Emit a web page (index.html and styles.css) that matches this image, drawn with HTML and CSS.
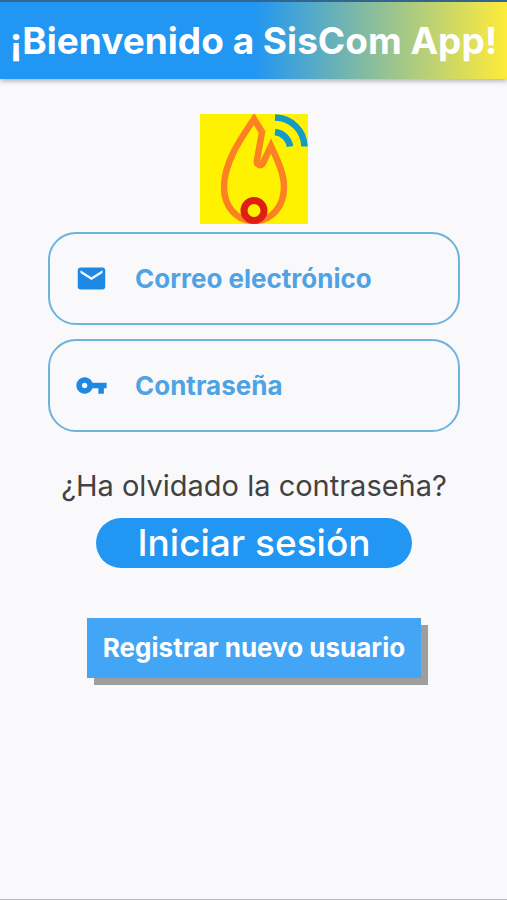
FILE: index.html
```html
<!DOCTYPE html>
<html lang="es">
<head>
<meta charset="utf-8">
<meta name="viewport" content="width=device-width, initial-scale=1">
<title>SisCom App</title>
<link rel="stylesheet" href="styles.css">
</head>
<body>
<header class="app-bar"><h1>¡Bienvenido a SisCom App!</h1></header>
<main class="login">
  <svg class="logo" viewBox="0 0 108 110" role="img" aria-label="SisCom">
    <rect width="108" height="110" fill="#fff200"/>
    <path d="M54 5C45 19 24 46 24 73C24 92 36 107 54 107C72 107 84 92 84 73C84 59 77 45 71 32L63 49C61 53 56 51 57 46L62 18Z" fill="none" stroke="#fb8122" stroke-width="6.500"/>
    <circle cx="54" cy="96.500" r="10" fill="#fff200" stroke="#df1f14" stroke-width="7"/>
    <path d="M75 3.500C91 4 104 16 104.500 32.500M75 18C83 19 89 25 90 32.500" fill="none" stroke="#129bc5" stroke-width="6.500"/>
  </svg>
  <form class="form">
    <label class="field">
      <svg class="icon" viewBox="0 0 24 24" aria-hidden="true"><path d="M20 4H4c-1.100 0-2 .9-2 2v12c0 1.100.9 2 2 2h16c1.100 0 2-.9 2-2V6c0-1.100-.9-2-2-2zm0 4l-8 5-8-5V6l8 5 8-5v2z"/></svg>
      <input type="email" placeholder="Correo electrónico" aria-label="Correo electrónico">
    </label>
    <label class="field">
      <svg class="icon" viewBox="0 0 24 24" aria-hidden="true"><path d="M12.650 10C11.830 7.670 9.610 6 7 6c-3.310 0-6 2.690-6 6s2.690 6 6 6c2.610 0 4.830-1.670 5.650-4H17v4h4v-4h2v-4H12.650zM7 14c-1.100 0-2-.9-2-2s.9-2 2-2 2 .9 2 2-.9 2-2 2z"/></svg>
      <input type="password" placeholder="Contraseña" aria-label="Contraseña">
    </label>
    <a class="forgot" href="#">¿Ha olvidado la contraseña?</a>
    <button class="sign-in" type="submit">Iniciar sesión</button>
    <button class="register" type="button">Registrar nuevo usuario</button>
  </form>
</main>
</body>
</html>
```
FILE: styles.css
```css
* {
  box-sizing: border-box;
}

body {
  margin: 0;
  min-height: 100vh;
  background: #f9f9fc;
  border-bottom: 1px solid #b8b8ba;
  font-family: Inter, "Liberation Sans", sans-serif;
}

.app-bar {
  padding: 16px 0 15px;
  border-top: 2px solid #33658f;
  background: linear-gradient(90deg, #2196f3 50%, #ffeb3b 100%);
  box-shadow: 0 2px 5px rgba(0, 0, 0, 0.3);
}

.app-bar h1 {
  margin: 0;
  color: #fff;
  font-size: 37px;
  font-weight: 700;
  line-height: 46px;
  text-align: center;
  white-space: nowrap;
}

.login {
  display: flex;
  flex-direction: column;
  align-items: center;
  padding: 35px 47px 0 48px;
}

.logo {
  display: block;
  width: 108px;
  height: 110px;
}

.form {
  display: flex;
  flex-direction: column;
  align-items: center;
  width: 100%;
  margin-top: 8px;
}

.field {
  display: flex;
  align-items: center;
  gap: 27px;
  width: 100%;
  height: 93px;
  margin-bottom: 14px;
  padding: 0 25px;
  border: 2px solid #6eb3dc;
  border-radius: 28px;
}

.icon {
  flex: none;
  width: 33px;
  height: 33px;
  fill: #1e88e5;
}

.field input {
  flex: 1;
  min-width: 0;
  padding: 0;
  border: 0;
  outline: 0;
  background: transparent;
  color: #4fa3e3;
  font: 700 26px/32px Inter, "Liberation Sans", sans-serif;
}

.field input::placeholder {
  color: #4fa3e3;
  opacity: 1;
}

.forgot {
  margin-top: 22px;
  color: #424242;
  font-size: 29px;
  line-height: 36px;
  text-decoration: none;
  white-space: nowrap;
}

.sign-in {
  margin-top: 14px;
  padding: 0 41px;
  border: 0;
  border-radius: 25px;
  background: #2196f3;
  color: #fff;
  font: 500 37px/50px Inter, "Liberation Sans", sans-serif;
}

.register {
  margin-top: 50px;
  padding: 0 16px;
  border: 0;
  background: #42a5f5;
  box-shadow: 7px 7px 0 #9e9e9e;
  color: #fff;
  font: 700 26px/60px Inter, "Liberation Sans", sans-serif;
}
```
